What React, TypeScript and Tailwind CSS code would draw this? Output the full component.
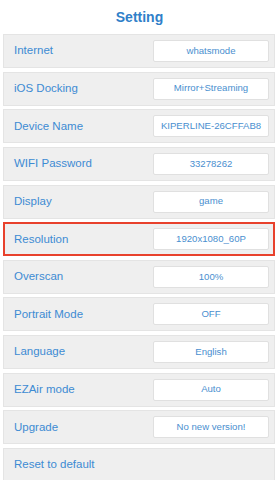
import React from 'react';

type Item = { label: string; value?: string; active?: boolean };

const items: Item[] = [
  { label: 'Internet', value: 'whatsmode' },
  { label: 'iOS Docking', value: 'Mirror+Streaming' },
  { label: 'Device Name', value: 'KIPERLINE-26CFFAB8' },
  { label: 'WIFI Password', value: '33278262' },
  { label: 'Display', value: 'game' },
  { label: 'Resolution', value: '1920x1080_60P', active: true },
  { label: 'Overscan', value: '100%' },
  { label: 'Portrait Mode', value: 'OFF' },
  { label: 'Language', value: 'English' },
  { label: 'EZAir mode', value: 'Auto' },
  { label: 'Upgrade', value: 'No new version!' },
  { label: 'Reset to default' },
];

const SettingRow: React.FC<{ item: Item }> = ({ item }) => (
  <div
    className={`flex items-center justify-between h-[34px] shrink-0 bg-[#efefef] ${
      item.active ? 'border-2 border-[#e8412c] pl-[9px] pr-[4px]' : 'border border-[#e4e4e4] pl-[10px] pr-[5px]'
    }`}
  >
    <span className="text-[11.5px] text-[#3d8bd3]">{item.label}</span>
    {item.value && (
      <div className="w-[116px] h-[22px] bg-white border border-[#e0e0e0] rounded-[2px] flex items-center justify-center">
        <span className="text-[9.6px] text-[#4a8fcf] whitespace-nowrap">{item.value}</span>
      </div>
    )}
  </div>
);

export default function App() {
  return (
    <div className="w-[279px] h-[480px] bg-white overflow-hidden font-['Liberation_Sans',Arial,sans-serif]">
      <div className="h-[34px] flex items-center justify-center">
        <h1 className="text-[14px] text-[#2f80c9] font-bold">Setting</h1>
      </div>
      <div className="flex flex-col gap-[3.64px] pl-[3px] pr-[4px]">
        {items.map((item, i) => (
          <SettingRow key={i} item={item} />
        ))}
      </div>
    </div>
  );
}
